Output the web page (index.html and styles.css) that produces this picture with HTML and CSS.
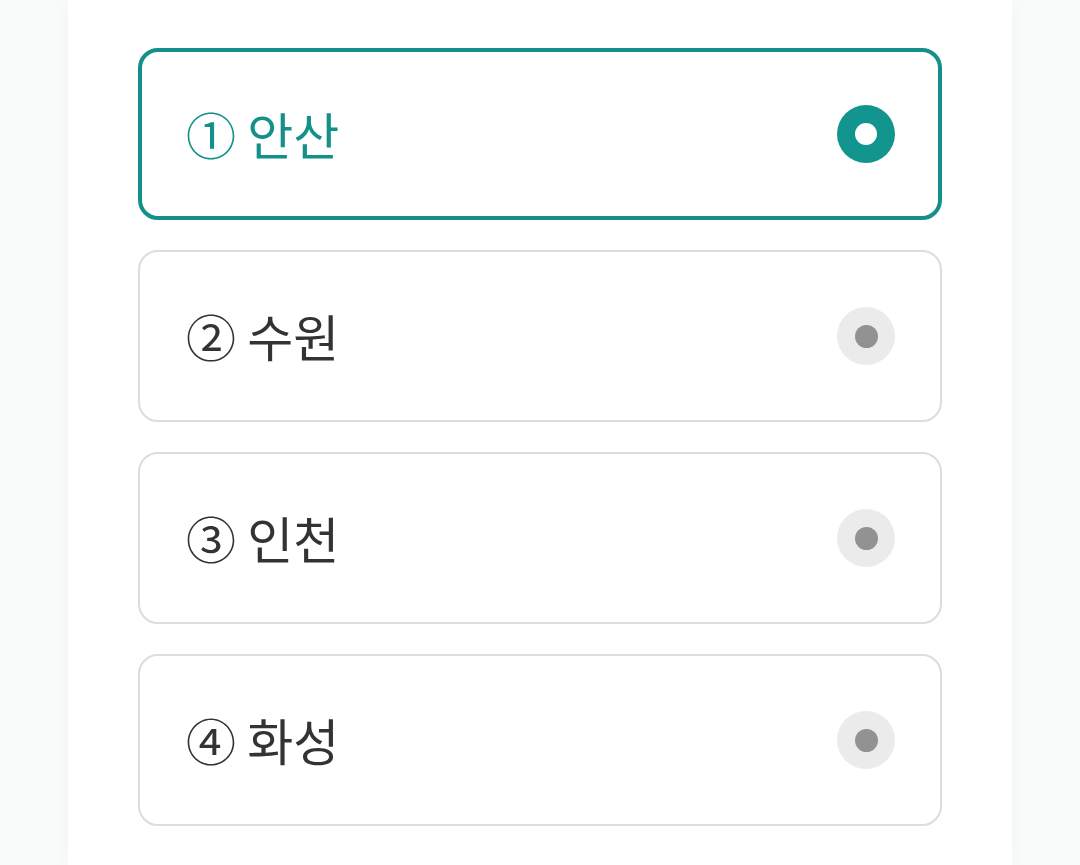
FILE: index.html
```html
<html>
<head>
	<meta charset="utf-8" />
	<link rel="stylesheet" href="styles.css">
</head>
<body>
	<div class="page">
		<div class="options">
			<label class="option selected">
				<span class="label">① 안산</span>
				<span class="radio"></span>
			</label>
			<label class="option">
				<span class="label">② 수원</span>
				<span class="radio"></span>
			</label>
			<label class="option">
				<span class="label">③ 인천</span>
				<span class="radio"></span>
			</label>
			<label class="option">
				<span class="label">④ 화성</span>
				<span class="radio"></span>
			</label>
		</div>
	</div>
</body>
</html>
```

FILE: styles.css
```css
body {
	margin: 0;
	padding: 0;
	background: #f9fafa;
	font-family: "Noto Sans CJK KR", "Noto Sans", sans-serif;
}
.page {
	width: 944px;
	margin-left: 68px;
	min-height: 865px;
	background: #fff;
	box-shadow: 0 0 18px rgba(0, 0, 0, 0.03);
	padding: 48px 70px 0 70px;
	box-sizing: border-box;
}
.options {
	display: flex;
	flex-direction: column;
	gap: 30px;
}
.option {
	display: flex;
	align-items: center;
	justify-content: space-between;
	height: 172px;
	box-sizing: border-box;
	border: 2px solid #dcdcdc;
	border-radius: 20px;
	padding: 0 45px 0 46px;
	cursor: pointer;
}
.label {
	font-size: 50px;
	color: #333;
	line-height: 1;
	margin-top: -2px;
}
.radio {
	width: 58px;
	height: 58px;
	border-radius: 50%;
	background: #ebebeb;
	display: flex;
	align-items: center;
	justify-content: center;
}
.radio::after {
	content: "";
	width: 23px;
	height: 23px;
	border-radius: 50%;
	background: #929292;
}
.option.selected {
	border: 4px solid #14908a;
	padding: 0 43px 0 44px;
}
.option.selected .label {
	color: #14908a;
}
.option.selected .radio {
	background: #12958e;
}
.option.selected .radio::after {
	width: 22px;
	height: 22px;
	background: #fff;
}
```
